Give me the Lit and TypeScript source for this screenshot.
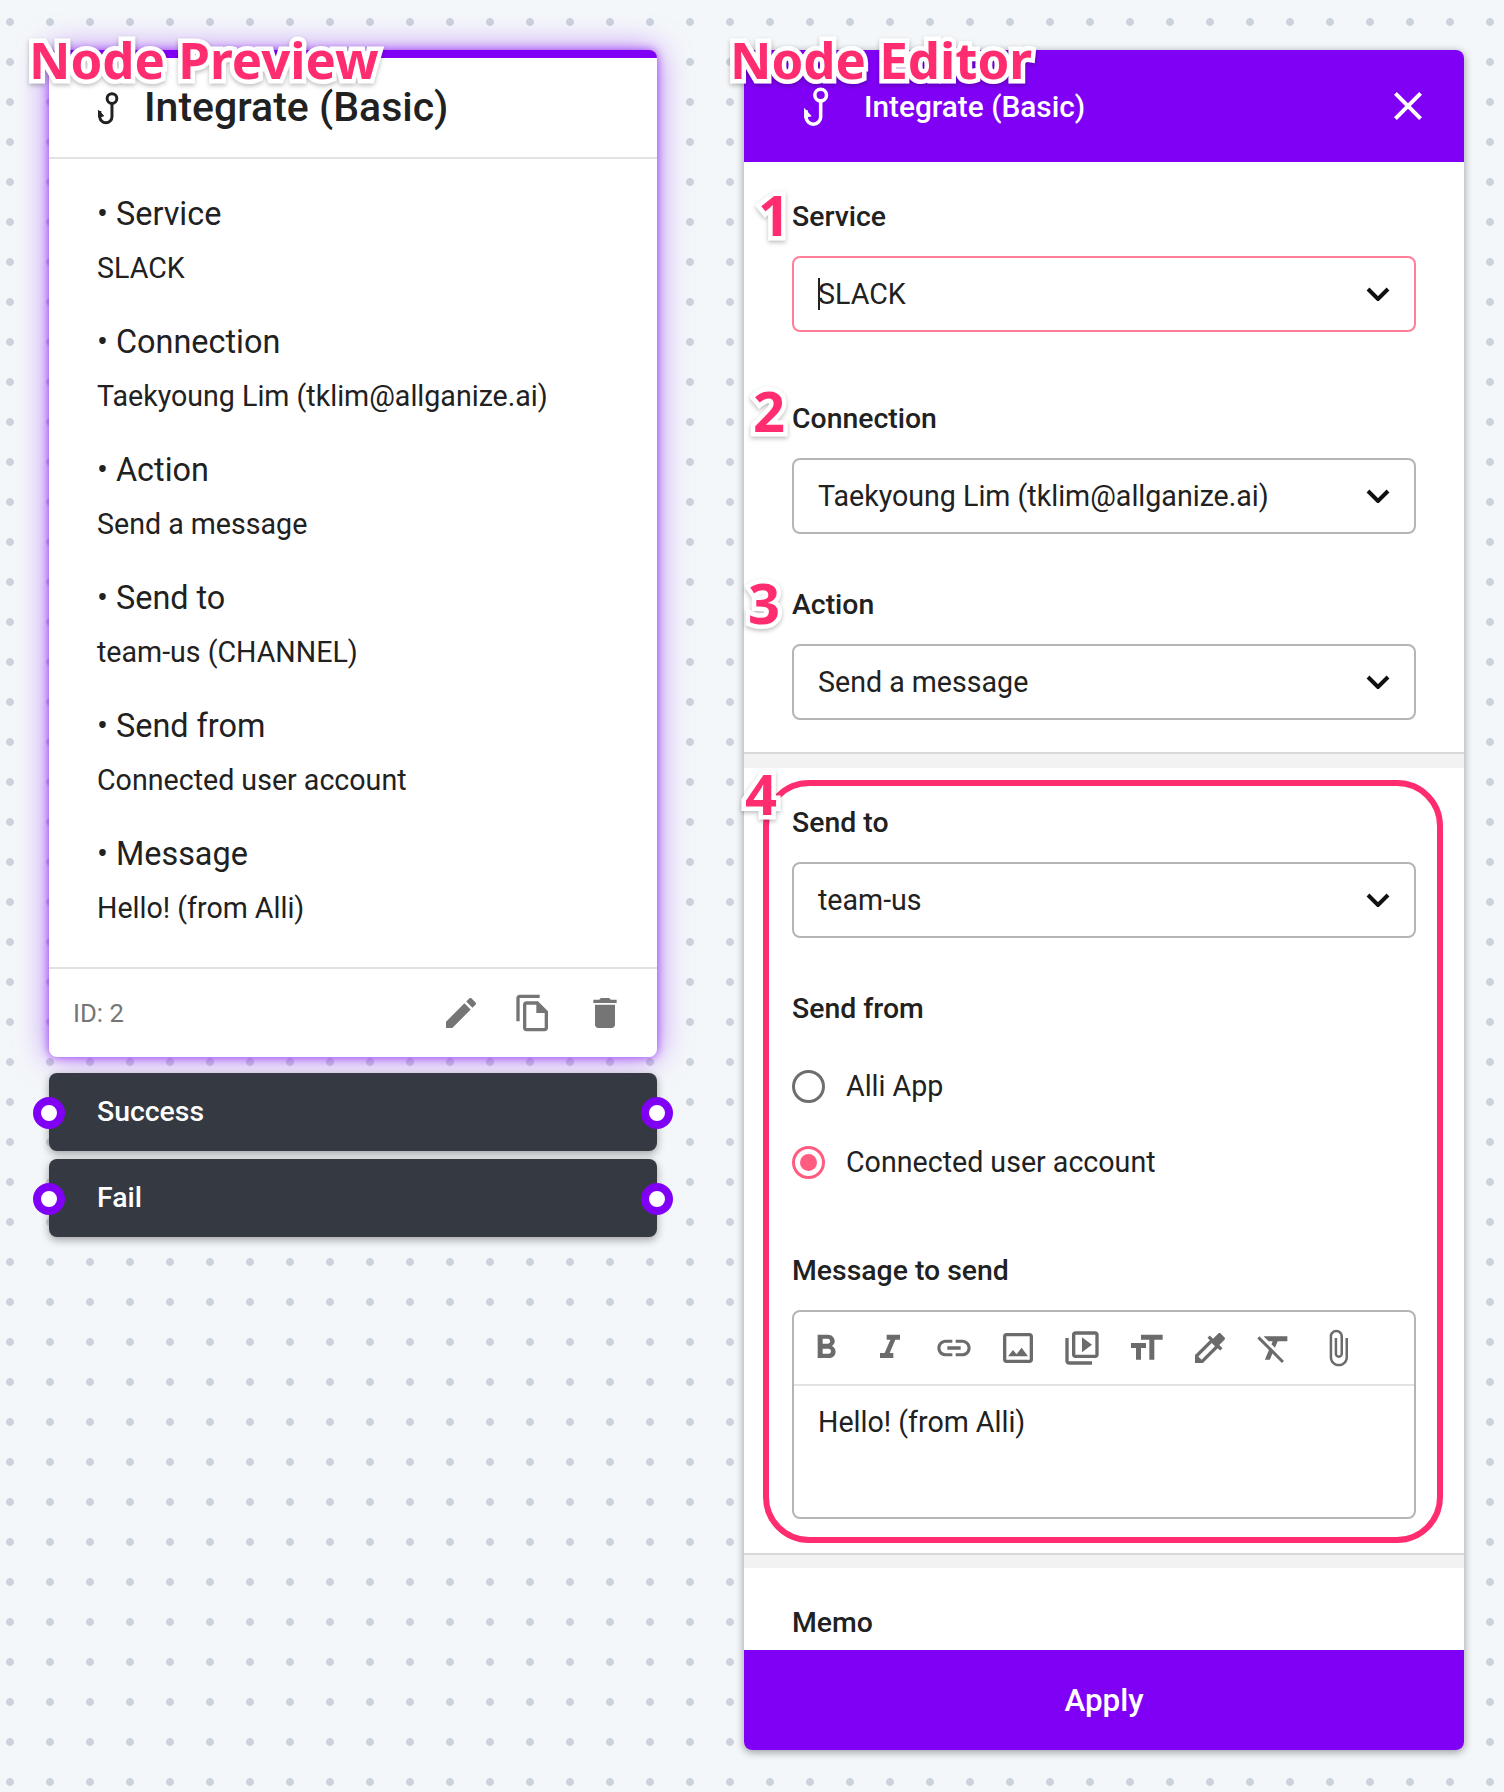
import { LitElement, html, css, svg } from "lit";
import { customElement } from "lit/decorators.js";

const P = {
  edit: "M3 17.25V21h3.75L17.81 9.94l-3.75-3.75L3 17.25zM20.71 7.04c.39-.39.39-1.02 0-1.41l-2.34-2.34c-.39-.39-1.02-.39-1.41 0l-1.83 1.83 3.75 3.75 1.83-1.83z",
  copy: "M16 1H4c-1.1 0-2 .9-2 2v14h2V3h12V1zm-1 4H8c-1.1 0-1.99.9-1.99 2L6 21c0 1.1.89 2 1.99 2H19c1.1 0 2-.9 2-2V11l-6-6zM8 21V7h6v5h5v9H8z",
  del: "M6 19c0 1.1.9 2 2 2h8c1.1 0 2-.9 2-2V7H6v12zM19 4h-3.5l-1-1h-5l-1 1H5v2h14V4z",
  close: "M19 6.41L17.59 5 12 10.59 6.41 5 5 6.41 10.59 12 5 17.59 6.41 19 12 13.41 17.59 19 19 17.59 13.41 12z",
  bold: "M15.6 10.79c.97-.67 1.65-1.77 1.65-2.79 0-2.26-1.75-4-4-4H7v14h7.04c2.09 0 3.71-1.7 3.71-3.79 0-1.52-.86-2.82-2.15-3.42zM10 6.5h3c.83 0 1.5.67 1.5 1.5s-.67 1.5-1.5 1.5h-3v-3zm3.5 9H10v-3h3.5c.83 0 1.5.67 1.5 1.5s-.67 1.5-1.5 1.5z",
  italic: "M10 4v3h2.21l-3.42 8H6v3h8v-3h-2.21l3.42-8H18V4z",
  link: "M3.9 12c0-1.71 1.39-3.1 3.1-3.1h4V7H7c-2.76 0-5 2.24-5 5s2.24 5 5 5h4v-1.9H7c-1.71 0-3.1-1.39-3.1-3.1zM8 13h8v-2H8v2zm9-6h-4v1.9h4c1.71 0 3.1 1.39 3.1 3.1s-1.39 3.1-3.1 3.1h-4V17h4c2.76 0 5-2.24 5-5s-2.24-5-5-5z",
  image: "M19 5v14H5V5h14m0-2H5c-1.1 0-2 .9-2 2v14c0 1.1.9 2 2 2h14c1.1 0 2-.9 2-2V5c0-1.1-.9-2-2-2zm-4.86 8.86l-3 3.87L9 13.14 6 17h12l-3.86-5.14z",
  video: "M4 6H2v14c0 1.1.9 2 2 2h14v-2H4V6zm16-4H8c-1.1 0-2 .9-2 2v12c0 1.1.9 2 2 2h12c1.1 0 2-.9 2-2V4c0-1.1-.9-2-2-2zm0 14H8V4h12v12zM12 5.5v9l6-4.5z",
  size: "M9 4v3h5v12h3V7h5V4H9zm-6 8h3v7h3v-7h3V9H3v3z",
  color: "M20.71 5.63l-2.34-2.34c-.39-.39-1.02-.39-1.41 0l-3.12 3.12-1.93-1.91-1.41 1.41 1.42 1.42L3 16.25V21h4.75l8.92-8.92 1.42 1.42 1.41-1.41-1.92-1.92 3.12-3.12c.4-.4.4-1.03.01-1.42zM6.92 19L5 17.08l8.06-8.06 1.92 1.92L6.92 19z",
  clear: "M3.27 5L2 6.27l6.97 6.97L6.5 19h3l1.57-3.66L16.73 21 18 19.73 3.55 5.27 3.27 5zM6 5v.18L8.82 8h2.4l-.72 1.68 2.1 2.1L14.21 8H20V5H6z",
  attach: "M16.5 6v11.5c0 2.21-1.79 4-4 4s-4-1.79-4-4V5c0-1.38 1.12-2.5 2.5-2.5s2.5 1.12 2.5 2.5v10.5c0 .55-.45 1-1 1s-1-.45-1-1V6H10v9.5c0 1.38 1.12 2.5 2.5 2.5s2.5-1.12 2.5-2.5V5c0-2.21-1.79-4-4-4S7 2.79 7 5v12.5c0 3.04 2.46 5.5 5.5 5.5s5.5-2.46 5.5-5.5V6h-1.5z",
};

const icon = (d: string, cls = "ic") =>
  html`<svg class=${cls} viewBox="0 0 24 24" fill="currentColor"><path d=${d}></path></svg>`;

const hook = (cls: string) => html`<svg class=${cls} viewBox="0 0 24 38" fill="none" stroke="currentColor" stroke-width="3.4">
  ${svg`<circle cx="16" cy="7.5" r="5.6"></circle>
  <path d="M16 13V28.5a7 7 0 0 1-14 0V22"></path>
  <path d="M0.5 21l0 8l6 -1.5z" fill="currentColor" stroke-width="1"></path>`}
</svg>`;

const chevron = html`<svg class="chev" viewBox="0 0 24 14" fill="none" stroke="#111" stroke-width="4">
  ${svg`<path d="M2 2l10 10L22 2"></path>`}
</svg>`;

const items: [string, string][] = [
  ["Service", "SLACK"],
  ["Connection", "Taekyoung Lim (tklim@allganize.ai)"],
  ["Action", "Send a message"],
  ["Send to", "team-us (CHANNEL)"],
  ["Send from", "Connected user account"],
  ["Message", "Hello! (from Alli)"],
];

const tools = [P.bold, P.italic, P.link, P.image, P.video, P.size, P.color, P.clear, P.attach];

@customElement("app-root")
export class AppRoot extends LitElement {
  static styles = css`
    :host {
      display: block;
      position: relative;
      width: 1504px;
      height: 1792px;
      overflow: hidden;
      font-family: Roboto, "Liberation Sans", sans-serif;
      color: #212121;
      background-color: #f4f7fa;
      background-image: radial-gradient(circle at 10px 22px, #ccd3dc 3.6px, transparent 4.2px);
      background-size: 40px 40px;
    }
    .page {
      display: flex;
      align-items: flex-start;
      padding: 50px 0 0 49px;
      gap: 87px;
    }
    .col { width: 608px; display: flex; flex-direction: column; }
    .card {
      height: 1007px;
      display: flex;
      flex-direction: column;
      background: #fff;
      border-top: 8px solid #8000f6;
      border-radius: 8px;
      box-shadow: 0 0 10px rgba(128, 0, 246, 0.65), 0 0 32px rgba(128, 0, 246, 0.5);
      box-sizing: border-box;
    }
    .card-head {
      height: 101px;
      box-sizing: border-box;
      border-bottom: 2px solid #e2e2e2;
      display: flex;
      align-items: center;
      gap: 25px;
      padding: 0 0 0 49px;
    }
    .hook-s { width: 21px; height: 33px; color: #212121; margin-top: 2px; }
    .card-title { font-size: 41px; font-weight: 500; line-height: 44px; margin-top: -1px; }
    .card-body { flex: 1; padding: 39px 0 0 48px; display: flex; flex-direction: column; gap: 42px; }
    .item { display: flex; flex-direction: column; gap: 22px; }
    .item-l { font-size: 32.4px; line-height: 32px; }
    .item-v { font-size: 28.6px; line-height: 32px; }
    .card-foot {
      height: 90px;
      box-sizing: border-box;
      border-top: 2px solid #e2e2e2;
      display: flex;
      align-items: center;
      padding: 0 32px 0 24px;
      color: #757575;
    }
    .id { flex: 1; font-size: 25.7px; }
    .acts { display: flex; gap: 32px; }
    .ic { width: 40px; height: 40px; display: block; }
    .out {
      position: relative;
      height: 78px;
      background: #353a42;
      border-radius: 8px;
      box-shadow: 0 3px 8px rgba(0, 0, 0, 0.35);
      display: flex;
      align-items: center;
      padding: 0 0 1px 48px;
      box-sizing: border-box;
      color: #fff;
      font-size: 28.4px;
      font-weight: 500;
    }
    .out.first { margin-top: 16px; }
    .out.next { margin-top: 8px; }
    .port {
      position: absolute;
      top: 24px;
      width: 16px;
      height: 16px;
      border: 8px solid #8000f6;
      border-radius: 50%;
      background: #fff;
    }
    .port.l { left: -16px; }
    .port.r { right: -16px; }

    .editor {
      width: 720px;
      height: 1700px;
      display: flex;
      flex-direction: column;
      background: #fff;
      border-radius: 8px;
      box-shadow: 0 2px 8px rgba(0, 0, 0, 0.4);
      overflow: hidden;
    }
    .ed-head {
      height: 112px;
      flex: none;
      background: #8000f6;
      color: #fff;
      display: flex;
      align-items: center;
      padding: 0 32px 0 60px;
      box-sizing: border-box;
    }
    .hook-l { width: 25px; height: 40px; margin-right: 35px; margin-top: 2px; flex: none; }
    .ed-title { flex: 1; font-size: 29.8px; font-weight: 500; }
    .x { width: 48px; height: 48px; flex: none; }
    .ed-body { flex: 1; overflow: hidden; display: flex; flex-direction: column; min-height: 0; }
    .sec { padding: 38px 48px 0 48px; display: flex; flex-direction: column; box-sizing: border-box; flex: none; }
    .sec.one { height: 590px; }
    .sec.two { height: 785px; }
    .sec.three { flex: 1; }
    .lbl { font-size: 28.4px; font-weight: 500; line-height: 34px; margin-bottom: -2px; flex: none; }
    .select {
      height: 76px;
      flex: none;
      box-sizing: border-box;
      border: 2px solid #b5b5b5;
      border-radius: 8px;
      display: flex;
      align-items: center;
      justify-content: space-between;
      padding: 0 24px 0 24px;
      font-size: 28.6px;
      margin-top: 24px;
    }
    .select.on { border-color: #ff7e98; position: relative; }
    .caret { position: absolute; left: 24px; top: 20px; width: 1.5px; height: 32px; background: #222; }
    .chev { width: 24px; height: 14px; }
    .mt70 { margin-top: 70px; }
    .mt54 { margin-top: 54px; }
    .mt59 { margin-top: 59px; }
    .gutter {
      height: 16px;
      flex: none;
      background: #f2f2f2;
      border-top: 2px solid #d8d8d8;
      box-sizing: border-box;
    }
    .gutter.b { height: 15px; }
    .radios { display: flex; flex-direction: column; gap: 10px; margin-top: 29px; flex: none; }
    .radio { display: flex; align-items: center; height: 66px; gap: 21px; font-size: 28.6px; }
    .dot {
      width: 33px;
      height: 33px;
      box-sizing: border-box;
      border: 3px solid #6e6e6e;
      border-radius: 50%;
      display: flex;
      align-items: center;
      justify-content: center;
    }
    .dot.on { border-color: #ff5c80; }
    .dot.on::after { content: ""; width: 17px; height: 17px; border-radius: 50%; background: #ff5c80; }
    .rte {
      height: 209px;
      flex: none;
      box-sizing: border-box;
      border: 2px solid #b5b5b5;
      border-radius: 8px;
      margin-top: 24px;
    }
    .bar {
      height: 74px;
      box-sizing: border-box;
      border-bottom: 2px solid #e2e2e2;
      display: flex;
      align-items: center;
      gap: 24px;
      padding: 0 0 0 12px;
      color: #6b6b6b;
    }
    .rte-text { padding: 20px 0 0 24px; font-size: 28.6px; line-height: 32px; }
    .apply {
      height: 100px;
      flex: none;
      background: #8000f6;
      color: #fff;
      display: flex;
      align-items: center;
      justify-content: center;
      font-size: 31.4px;
      font-weight: 500;
    }

    .frame {
      position: absolute;
      left: 763px;
      top: 780px;
      width: 680px;
      height: 763px;
      box-sizing: border-box;
      border: 6px solid #ff2d6f;
      border-radius: 46px;
    }
    .tag {
      position: absolute;
      font-family: "Noto Sans", Roboto, sans-serif;
      font-weight: 700;
      color: #ff2d6f;
      -webkit-text-stroke: 9px #fff;
      paint-order: stroke fill;
      filter: drop-shadow(0 2px 2px rgba(0, 0, 0, 0.25));
      line-height: 1;
      white-space: nowrap;
    }
    .tag.big { font-size: 51px; }
    .tag.num { font-size: 56px; }
    .t1 { left: 29px; top: 34px; }
    .t2 { left: 730px; top: 34px; }
    .n1 { left: 758px; top: 186px; }
    .n2 { left: 753px; top: 382px; }
    .n3 { left: 748px; top: 574px; }
    .n4 { left: 745px; top: 765px; }
  `;

  render() {
    return html`
      <div class="page">
        <div class="col">
          <div class="card">
            <div class="card-head">${hook("hook-s")}<div class="card-title">Integrate (Basic)</div></div>
            <div class="card-body">
              ${items.map(
                ([l, v]) => html`<div class="item">
                  <div class="item-l">• ${l}</div>
                  <div class="item-v">${v}</div>
                </div>`
              )}
            </div>
            <div class="card-foot">
              <div class="id">ID: 2</div>
              <div class="acts">${icon(P.edit)}${icon(P.copy)}${icon(P.del)}</div>
            </div>
          </div>
          <div class="out first">Success<span class="port l"></span><span class="port r"></span></div>
          <div class="out next">Fail<span class="port l"></span><span class="port r"></span></div>
        </div>

        <div class="editor">
          <div class="ed-head">
            ${hook("hook-l")}
            <div class="ed-title">Integrate (Basic)</div>
            ${icon(P.close, "x")}
          </div>
          <div class="ed-body">
            <div class="sec one">
              <div class="lbl">Service</div>
              <div class="select on"><span class="caret"></span><span>SLACK</span>${chevron}</div>
              <div class="lbl mt70">Connection</div>
              <div class="select"><span>Taekyoung Lim (tklim@allganize.ai)</span>${chevron}</div>
              <div class="lbl mt54">Action</div>
              <div class="select"><span>Send a message</span>${chevron}</div>
            </div>
            <div class="gutter"></div>
            <div class="sec two">
              <div class="lbl">Send to</div>
              <div class="select"><span>team-us</span>${chevron}</div>
              <div class="lbl mt54">Send from</div>
              <div class="radios">
                <div class="radio"><span class="dot"></span>Alli App</div>
                <div class="radio"><span class="dot on"></span>Connected user account</div>
              </div>
              <div class="lbl mt59">Message to send</div>
              <div class="rte">
                <div class="bar">${tools.map((t) => icon(t))}</div>
                <div class="rte-text">Hello! (from Alli)</div>
              </div>
            </div>
            <div class="gutter b"></div>
            <div class="sec three"><div class="lbl">Memo</div></div>
          </div>
          <div class="apply">Apply</div>
        </div>
      </div>

      <div class="frame"></div>
      <div class="tag big t1">Node Preview</div>
      <div class="tag big t2">Node Editor</div>
      <div class="tag num n1">1</div>
      <div class="tag num n2">2</div>
      <div class="tag num n3">3</div>
      <div class="tag num n4">4</div>
    `;
  }
}
